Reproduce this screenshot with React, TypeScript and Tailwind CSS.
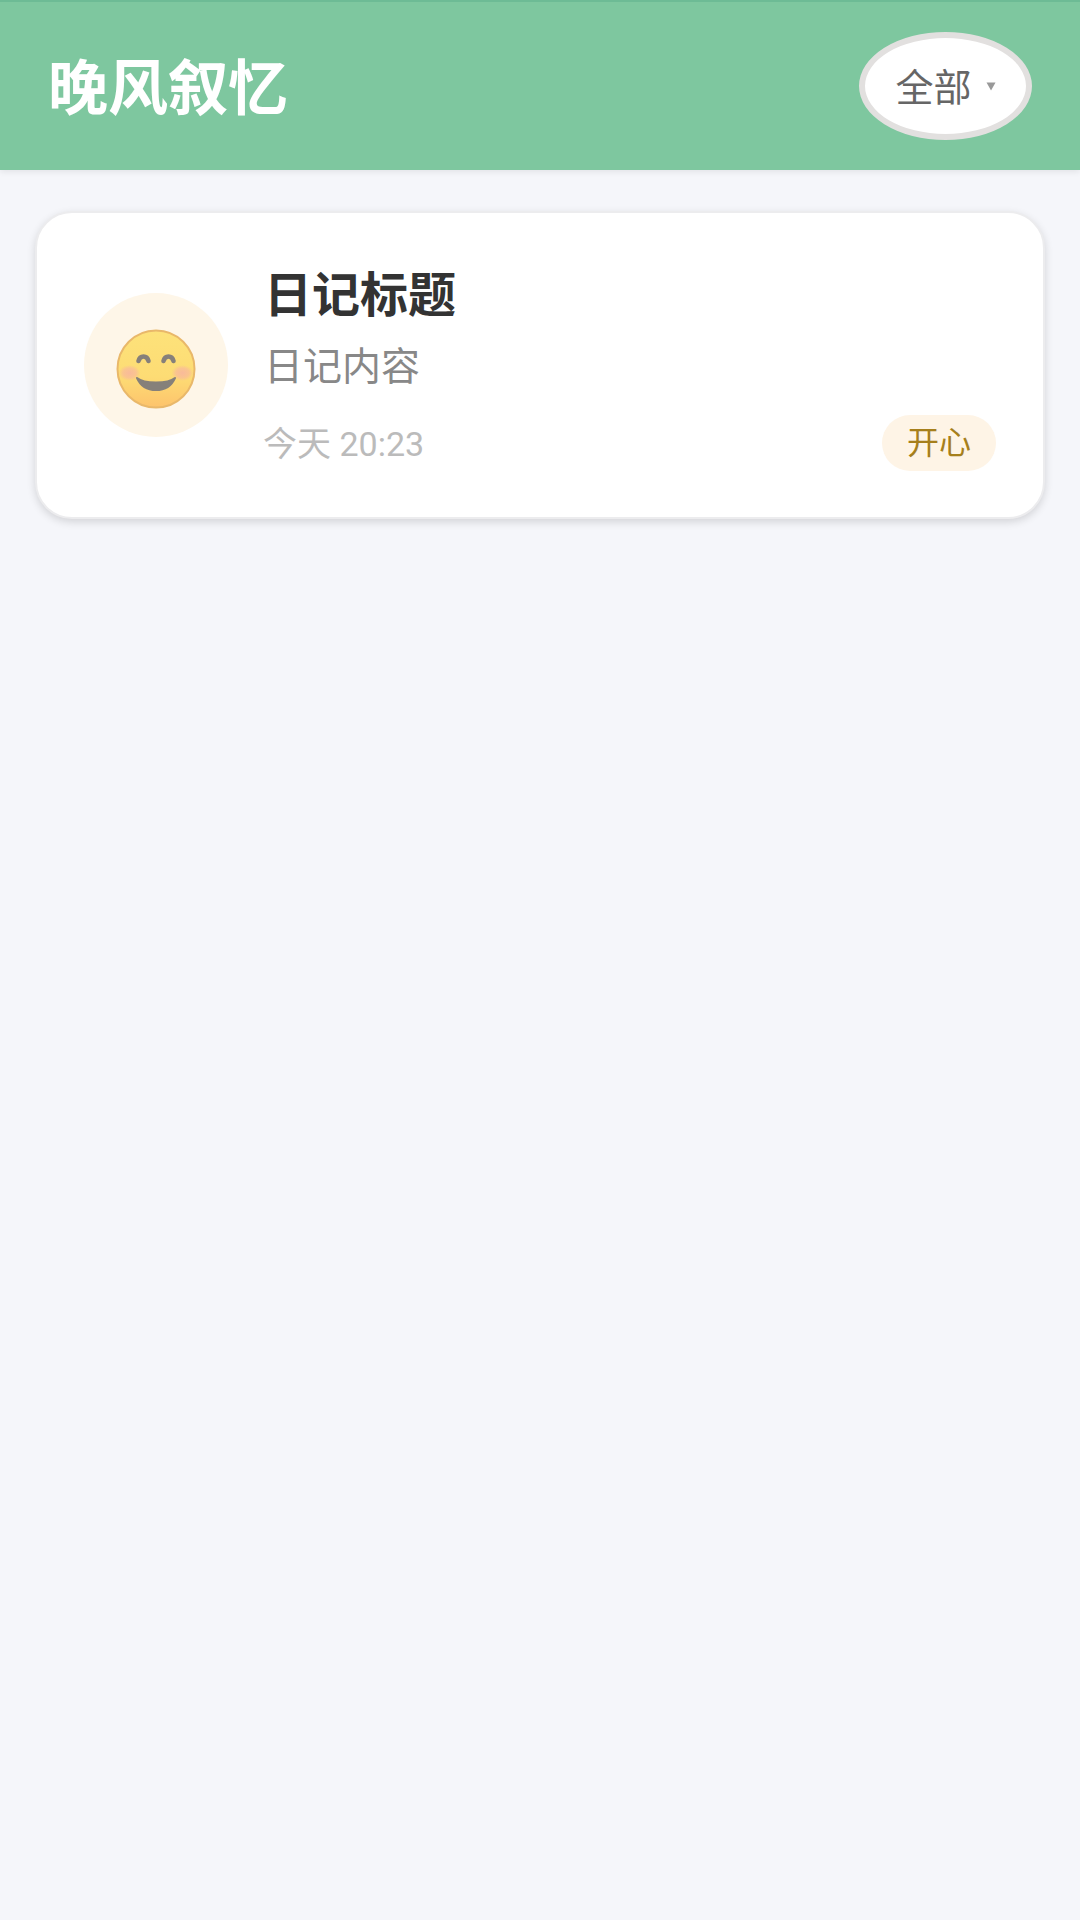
function Smile() {
  return (
    <svg width="84" height="84" viewBox="0 0 84 84">
      <defs>
        <linearGradient id="face" x1="0" y1="0" x2="0" y2="1">
          <stop offset="0" stopColor="#fde27a" />
          <stop offset="0.6" stopColor="#fddc74" />
          <stop offset="1" stopColor="#fdc36c" />
        </linearGradient>
        <radialGradient id="cheek">
          <stop offset="0" stopColor="#f8b4a0" stopOpacity="0.85" />
          <stop offset="0.6" stopColor="#f8b4a0" stopOpacity="0.6" />
          <stop offset="1" stopColor="#f8b4a0" stopOpacity="0" />
        </radialGradient>
      </defs>
      <circle cx="42" cy="42" r="38.5" fill="url(#face)" stroke="#e9b86a" strokeWidth="2" />
      <ellipse cx="15.5" cy="46" rx="11" ry="8" fill="url(#cheek)" />
      <ellipse cx="68.5" cy="46" rx="11" ry="8" fill="url(#cheek)" />
      <path d="M24.5 34 C26 28 33 28 34.5 34" fill="none" stroke="#86807a" strokeWidth="4.6" strokeLinecap="round" />
      <path d="M49.5 34 C51 28 58 28 59.5 34" fill="none" stroke="#86807a" strokeWidth="4.6" strokeLinecap="round" />
      <path d="M23 51 C30 57 54 57 61 51 C57 60 50 63 42 63 C34 63 27 60 23 51 Z" fill="#86807a" stroke="#86807a" strokeWidth="2" strokeLinejoin="round" />
    </svg>
  );
}

export default function App() {
  return (
    <div className="min-h-[1920px] w-[1080px] bg-[#f5f6fa] font-[family-name:Roboto,'Noto_Sans_CJK_SC',sans-serif]">
      <header className="flex h-[170px] items-center justify-between border-t-2 border-[#6dbb95] bg-[#7ec79f] pl-[48px] pr-[48px] shadow-[0_2px_6px_rgba(0,0,0,0.08)]">
        <h1 className="pt-[7px] text-[60px] font-bold leading-none text-white">晚风叙忆</h1>
        <div className="flex h-[108px] w-[173px] items-center justify-center gap-[14px] rounded-[50%] border-[6px] border-[#e2e0df] bg-white">
          <span className="pt-[3px] text-[38px] leading-none text-[#666666]">全部</span>
          <svg width="10" height="9" viewBox="0 0 10 9" className="mt-[1px]">
            <path d="M0.5 0.5 H9.5 L5 8.5 Z" fill="#999999" />
          </svg>
        </div>
      </header>
      <main className="px-[35px] pt-[41px]">
        <section className="flex h-[308px] items-center rounded-[37px] border-2 border-[#ececee] bg-white pl-[47px] pr-[47px] shadow-[0_3px_8px_rgba(0,0,0,0.14)]">
          <div className="flex h-[144px] w-[144px] shrink-0 items-center justify-center rounded-full bg-[#fef6e8] pt-[7px]">
            <Smile />
          </div>
          <div className="ml-[36px] flex h-full min-w-0 flex-1 flex-col pt-[55px]">
            <div className="text-[48px] font-bold leading-[56px] text-[#333333]">日记标题</div>
            <div className="mt-[20px] text-[39px] leading-[46px] text-[#888888]">日记内容</div>
            <div className="mt-[24px] flex items-center justify-between">
              <span className="-ml-[1px] pt-[2px] text-[34px] leading-[56px] text-[#bbbbbb]">今天 20:23</span>
              <span className="flex h-[56px] w-[114px] items-center justify-center rounded-full bg-[#fef4e6] text-[32px] leading-none text-[#a67f1c]">开心</span>
            </div>
          </div>
        </section>
      </main>
    </div>
  );
}
